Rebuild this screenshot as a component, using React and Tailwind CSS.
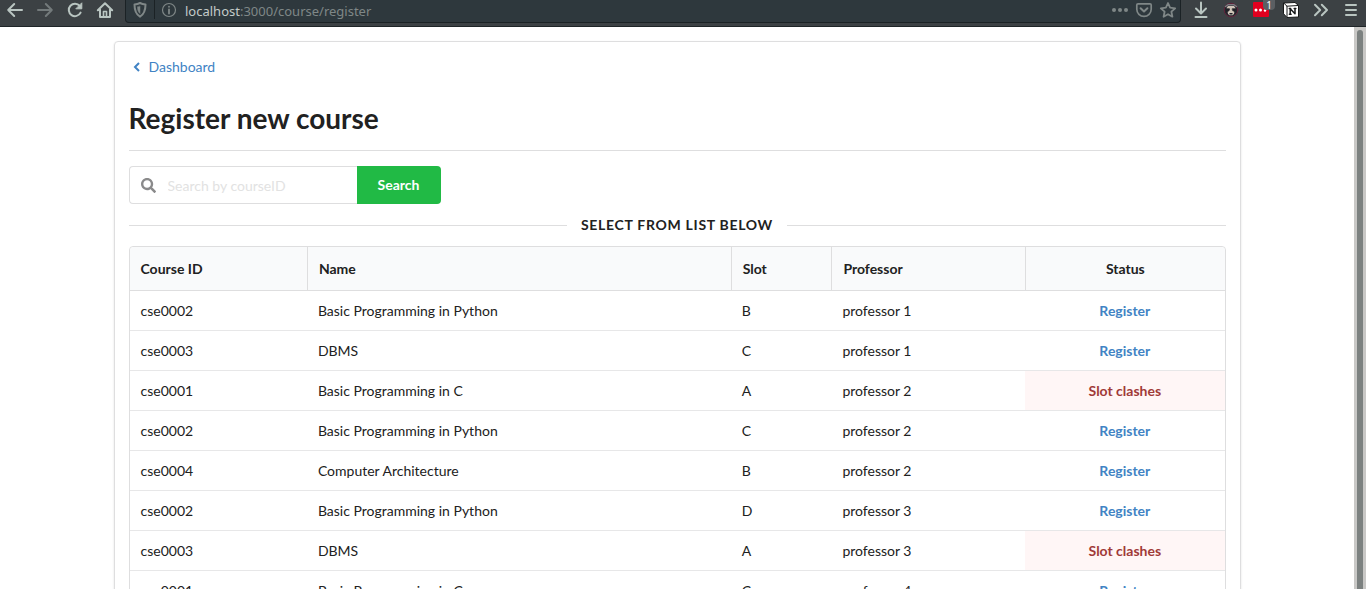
import React from "react";

const courses = [
  ["cse0002", "Basic Programming in Python", "B", "professor 1", true],
  ["cse0003", "DBMS", "C", "professor 1", true],
  ["cse0001", "Basic Programming in C", "A", "professor 2", false],
  ["cse0002", "Basic Programming in Python", "C", "professor 2", true],
  ["cse0004", "Computer Architecture", "B", "professor 2", true],
  ["cse0002", "Basic Programming in Python", "D", "professor 3", true],
  ["cse0003", "DBMS", "A", "professor 3", false],
  ["cse0001", "Basic Programming in C", "C", "professor 4", true],
];

function Glyph({ children, className = "" }) {
  return (
    <svg
      viewBox="0 0 16 16"
      className={"block size-4 overflow-visible " + className}
      fill="none"
      stroke="currentColor"
      strokeWidth="2"
      strokeLinecap="round"
      strokeLinejoin="round"
      aria-hidden="true"
    >
      {children}
    </svg>
  );
}

function ToolButton({ label, className = "", children }) {
  return (
    <button type="button" aria-label={label} className={"shrink-0 " + className}>
      {children}
    </button>
  );
}

function BrowserBar() {
  return (
    <header className="flex h-[27px] shrink-0 items-start border-b border-[#1f2528] bg-[#3c4144] text-[#b9c5c1]">
      <nav aria-label="Navigation" className="flex gap-3.5 pt-0.5 pl-[7px]">
        <ToolButton label="Back">
          <Glyph>
            <path d="M15 8H1.2M7.2 2 1.2 8l6 6" />
          </Glyph>
        </ToolButton>
        <ToolButton label="Forward" className="text-[#737a7b]">
          <Glyph>
            <path d="M1 8h13.8M8.8 2l6 6-6 6" />
          </Glyph>
        </ToolButton>
        <ToolButton label="Reload">
          <Glyph>
            <path d="M13.6 10.6A6.2 6.2 0 1 1 12.8 4" />
            <path d="M14.8 1.2v5.600H9.200z" fill="currentColor" strokeWidth="1" />
          </Glyph>
        </ToolButton>
        <ToolButton label="Home">
          <Glyph>
            <path d="M.8 8.2 8 1.2l7.2 7M3 7.5V15h10V7.5" />
            <path d="M6.5 14.5v-5h3v5" strokeWidth="1.6" />
          </Glyph>
        </ToolButton>
      </nav>

      <div className="ml-3 flex h-[23px] min-w-0 flex-1 items-start rounded-b border border-t-0 border-[#1b2225] bg-[#2e383d] text-[#7f8787]">
        <ToolButton label="Tracking protection" className="pt-0.5 pl-1.5">
          <Glyph>
            <path d="M8 1c2 1 3.500 1.300 5.500 1.500 0 6-1 9.500-5.500 12.200C3.500 12 2.500 8.500 2.500 2.500 4.500 2.300 6 2 8 1z" strokeWidth="2" />
            <path d="M8 4.500v7C6 10 5.500 7.800 5.500 5z" fill="currentColor" strokeWidth=".5" />
          </Glyph>
        </ToolButton>
        <span className="ml-1.5 h-[19px] w-px bg-[#1b2225]" />
        <ToolButton label="Site information" className="pt-0.5 pl-1.5">
          <Glyph>
            <circle cx="8" cy="8" r="6.5" strokeWidth="1.2" />
            <path d="M8 7.5v4M8 4.700v.1" strokeWidth="1.8" />
          </Glyph>
        </ToolButton>
        <p className="ml-2 flex-1 truncate font-['Noto_Sans',sans-serif] text-[13px] leading-[22px] text-[#7f8787]">
          <span className="text-[#c4cbc9]">localhost</span>:3000/course/register
        </p>
        <div className="flex gap-2 pt-0.5 pr-1">
          <ToolButton label="Page actions">
            <Glyph>
              <g fill="currentColor" stroke="none">
                <circle cx="2" cy="8" r="2" />
                <circle cx="8" cy="8" r="2" />
                <circle cx="14" cy="8" r="2" />
              </g>
            </Glyph>
          </ToolButton>
          <ToolButton label="Save to Pocket">
            <Glyph>
              <path d="M2 1.8h12A1.2 1.2 0 0 1 15.2 3v4.200a7.200 7.200 0 0 1-14.400 0V3A1.200 1.200 0 0 1 2 1.800z" strokeWidth="1.7" />
              <path d="m4.600 6.200 3.400 3.300 3.400-3.300" />
            </Glyph>
          </ToolButton>
          <ToolButton label="Bookmark">
            <Glyph>
              <path d="m8 1 2.100 4.700 5.100.6-3.800 3.400 1 5L8 12.200l-4.400 2.500 1-5L.8 6.300l5.100-.6z" strokeWidth="1.8" />
            </Glyph>
          </ToolButton>
        </div>
      </div>

      <div className="flex gap-3.5 pt-0.5 pr-[7px] pl-3">
        <ToolButton label="Downloads">
          <Glyph>
            <path d="M8 .5v10.500M3 6.500l5 5 5-5M2.500 15h11" />
          </Glyph>
        </ToolButton>
        <ToolButton label="Privacy extension">
          <Glyph>
            <circle cx="8" cy="8" r="6.8" fill="#24252c" stroke="#64243c" strokeWidth="1" />
            <path d="M2.500 4.500 5 2.800h6l2.500 1.700" stroke="#7d7a80" strokeWidth="1.4" />
            <path d="M5 4h6l1.500 2-1 3-.5 3-1.500 1.200h-3L5 12l-.5-3-1-3z" fill="#cfc4b8" stroke="none" />
            <path d="M3.500 6.800h3L6 8.800l-2 .7zM9.500 6.800h3L12 9.500l-2-.7z" fill="#1f2026" stroke="#1f2026" strokeWidth=".8" />
            <path d="M7 11.800h2" stroke="#1f2026" strokeWidth="1.4" />
          </Glyph>
        </ToolButton>
        <ToolButton label="Password manager" className="relative">
          <Glyph>
            <rect x="0" y="0" width="16" height="15" rx="1" fill="#e1001f" stroke="none" />
            <g fill="#fff" stroke="none">
              <circle cx="3" cy="8" r="1.500" />
              <circle cx="7.500" cy="8" r="1.500" />
              <circle cx="12" cy="8.500" r="1.200" />
            </g>
          </Glyph>
          <span className="absolute -top-0.5 -right-1.5 h-2.5 w-3 rounded-b-sm bg-[#5b5f63] text-center font-['Noto_Sans',sans-serif] text-[10px] leading-[10px] text-white">
            1
          </span>
        </ToolButton>
        <ToolButton label="Notes extension">
          <Glyph>
            <path d="M.8 1 12 .5 15.500 3.500V15l-11.500.5L.8 12z" fill="#fff" stroke="#17191a" strokeWidth="1" />
            <path d="M1.200 1.500 4 4.200v10.800M4 4.200l11-.7" stroke="#17191a" strokeWidth="1" />
            <path d="M7.200 12V6.800l4.800 5V6.600M6.300 6.600h1.400M11.200 6.500h1.600M6.400 12.200h1.700" stroke="#17191a" strokeWidth="1.500" />
          </Glyph>
        </ToolButton>
        <ToolButton label="More tools">
          <Glyph>
            <path d="m2 2.800 5.200 5.200L2 13.200M8.800 2.800 14 8l-5.200 5.200" />
          </Glyph>
        </ToolButton>
        <ToolButton label="Menu">
          <Glyph>
            <path d="M3 3h10M3 8h10M3 13h10" />
          </Glyph>
        </ToolButton>
      </div>
    </header>
  );
}

function CourseTable() {
  return (
    <table className="w-full table-fixed border-separate border-spacing-0 rounded border border-[#dededf] text-left">
      <colgroup>
        <col className="w-[16.2%]" />
        <col className="w-[38.7%]" />
        <col className="w-[9.2%]" />
        <col className="w-[17.7%]" />
        <col className="w-[18.2%]" />
      </colgroup>
      <thead>
        <tr className="h-11 bg-[#f9fafb]">
          {["Course ID", "Name", "Slot", "Professor", "Status"].map((title) => (
            <th
              key={title}
              scope="col"
              className="border-b border-l border-[#dededf] px-[11px] font-bold first:rounded-tl first:border-l-0 last:rounded-tr last:text-center"
            >
              {title}
            </th>
          ))}
        </tr>
      </thead>
      <tbody>
        {courses.map(([id, name, slot, professor, open], index) => (
          <tr key={index} className="h-10">
            <td className="border-b border-[#e7e7e8] px-[11px]">{id}</td>
            <td className="border-b border-[#e7e7e8] px-[11px]">{name}</td>
            <td className="border-b border-[#e7e7e8] px-[11px]">{slot}</td>
            <td className="border-b border-[#e7e7e8] px-[11px]">{professor}</td>
            {open ? (
              <td className="border-b border-[#e7e7e8] px-[11px] text-center font-bold">
                <a href="#register" className="text-[#4183c4]">
                  Register
                </a>
              </td>
            ) : (
              <td className="border-b border-[#e7e7e8] bg-[#fff6f6] px-[11px] text-center font-bold text-[#9f3a38]">
                Slot clashes
              </td>
            )}
          </tr>
        ))}
      </tbody>
    </table>
  );
}

export default function App() {
  return (
    <div className="flex h-screen flex-col overflow-hidden bg-white font-[Lato,sans-serif] text-sm text-[#212121]">
      <BrowserBar />
      <div className="flex min-h-0 flex-1">
        <main className="min-w-0 flex-1 overflow-hidden pt-3.5">
          <section className="mx-auto max-w-[1127px] rounded border border-[#dededf] p-3.5 shadow-[0_1px_2px_0_rgba(34,36,38,0.15)]">
            <a href="#dashboard" className="flex h-[22px] items-center gap-2 pl-1 text-[#4183c4]">
              <svg viewBox="0 0 8 10" className="h-2.5 w-2" fill="none" stroke="currentColor" strokeWidth="2" aria-hidden="true">
                <path d="M6 1 2 5l4 4" />
              </svg>
              Dashboard
            </a>
            <h1 className="mt-[22px] text-[28px] leading-9 font-bold">Register new course</h1>
            <hr className="mt-3.5 border-[#dededf]" />
            <form className="mt-[15px] flex h-[38px]" onSubmit={(e) => e.preventDefault()}>
              <div className="flex w-[228px] items-center gap-3 rounded-l border border-r-0 border-[#dededf] pl-[11px]">
                <svg viewBox="0 0 512 512" className="size-[15px] shrink-0 text-[#8a8a8b]" fill="currentColor" aria-hidden="true">
                  <path d="M505 442.700 405.300 343c-4.500-4.500-10.600-7-17-7H372c27.600-35.300 44-79.700 44-128C416 93.100 322.900 0 208 0S0 93.100 0 208s93.100 208 208 208c48.300 0 92.700-16.400 128-44v16.300c0 6.400 2.500 12.500 7 17l99.700 99.700c9.400 9.400 24.600 9.400 33.900 0l28.300-28.300c9.400-9.400 9.400-24.600.1-34zM208 336c-70.700 0-128-57.200-128-128 0-70.700 57.200-128 128-128 70.700 0 128 57.200 128 128 0 70.700-57.200 128-128 128z" />
                </svg>
                <input
                  type="text"
                  aria-label="Search by courseID"
                  placeholder="Search by courseID"
                  className="h-full min-w-0 flex-1 bg-transparent outline-none placeholder:text-[#e2e2e2]"
                />
              </div>
              <button type="submit" className="w-[84px] rounded-r bg-[#21ba45] font-bold text-white">
                Search
              </button>
            </form>
            <div className="my-3 flex items-center gap-3.5 leading-[18px] font-bold tracking-wider uppercase">
              <span className="h-px flex-1 bg-[#dededf]" />
              <h2>Select from list below</h2>
              <span className="h-px flex-1 bg-[#dededf]" />
            </div>
            <CourseTable />
          </section>
        </main>
        <div className="w-3 shrink-0 bg-[#c9c8c6] px-[3px] pt-[3px]" aria-hidden="true">
          <div className="h-full rounded-t-full bg-[#7c8180]" />
        </div>
      </div>
    </div>
  );
}
